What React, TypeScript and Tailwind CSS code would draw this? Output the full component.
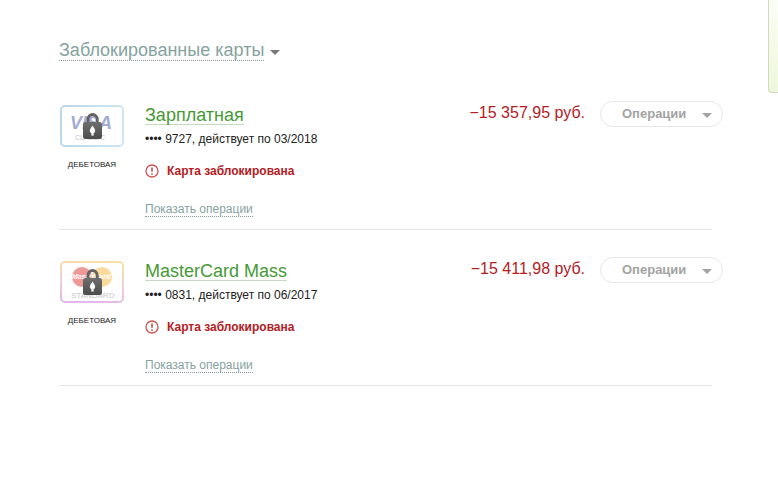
import { memo } from "react";

type CardBrand = "visa" | "mastercard";

type BlockedCard = {
  id: number;
  brand: CardBrand;
  name: string;
  lastDigits: string;
  expires: string;
  balance: string;
};

const cards: BlockedCard[] = [
  {
    id: 1,
    brand: "visa",
    name: "Зарплатная",
    lastDigits: "9727",
    expires: "03/2018",
    balance: "−15 357,95 руб.",
  },
  {
    id: 2,
    brand: "mastercard",
    name: "MasterCard Mass",
    lastDigits: "0831",
    expires: "06/2017",
    balance: "−15 411,98 руб.",
  },
];

const Lock = () => (
  <g>
    <path
      d="M28 19v-4.500a4.600 5 0 0 1 9.200 0V19"
      fill="none"
      stroke="#636363"
      strokeWidth="3"
    />
    <rect x="23" y="17" width="19" height="17" rx="2.5" fill="url(#lock)" />
    <path
      d="M32.500 20.500c.8 1.900 2.700 3.300 2.700 5.300a2.700 2.700 0 0 1-1.700 2.500l.3 2.200h-2.600l.3-2.200a2.700 2.700 0 0 1-1.700-2.500c0-2 1.900-3.400 2.700-5.300z"
      fill="#fff"
    />
  </g>
);

const CardImage = ({ brand }: { brand: CardBrand }) => (
  <svg
    className="block h-[42px] w-16"
    viewBox="0 0 64 42"
    role="img"
    aria-label={brand === "visa" ? "Visa Classic" : "MasterCard Standard"}
  >
    <defs>
      <linearGradient id="lock" x1="0" y1="0" x2="0" y2="1">
        <stop offset="0" stopColor="#6e6e6e" />
        <stop offset="1" stopColor="#4c4c4c" />
      </linearGradient>
      <linearGradient id="visaBorder" x1="0" y1="0" x2="1" y2="0">
        <stop offset="0" stopColor="#b9d8e8" />
        <stop offset="1" stopColor="#cde6f3" />
      </linearGradient>
      <linearGradient id="mcBorder" x1="0.6" y1="0" x2="0.4" y2="1">
        <stop offset="0" stopColor="#f8dfa6" />
        <stop offset="0.5" stopColor="#f2d0d3" />
        <stop offset="1" stopColor="#e2b8ec" />
      </linearGradient>
    </defs>
    <rect
      x="1"
      y="1"
      width="62"
      height="40"
      rx="4"
      fill="#fff"
      stroke={brand === "visa" ? "url(#visaBorder)" : "url(#mcBorder)"}
      strokeWidth="2"
    />
    {brand === "visa" ? (
      <g fontFamily="Liberation Sans, sans-serif">
        <text x="10" y="24" fontSize="18" fontWeight="700" fontStyle="italic" fill="#a3abd3">
          VISA
        </text>
        <text x="15" y="35" fontSize="7" fill="#c6c6c6">
          CLASSIC
        </text>
      </g>
    ) : (
      <g fontFamily="Liberation Sans, sans-serif">
        <circle cx="42" cy="16" r="10" fill="#fbdb9d" />
        <circle cx="22" cy="16" r="10" fill="#ee9898" />
        <text x="12" y="18" fontSize="7" fontWeight="700" fontStyle="italic" fill="#fff">
          MasterCard
        </text>
        <text x="11" y="37" fontSize="8" fill="#c6c6c6">
          STANDARD
        </text>
      </g>
    )}
    <Lock />
  </svg>
);

const WarningIcon = () => (
  <svg className="size-3.5" viewBox="0 0 14 14" aria-hidden="true">
    <circle cx="7" cy="7" r="6" fill="none" stroke="#cf5353" strokeWidth="1.300" />
    <path d="M7 3.500v4.300M7 9.200v1.500" stroke="#c43d3d" strokeWidth="1.500" />
  </svg>
);

const Caret = ({ className }: { className: string }) => (
  <svg className={className} viewBox="0 0 10 5" aria-hidden="true">
    <path d="M0 0h10L5 5z" fill="currentColor" />
  </svg>
);

const CardRow = memo(({ card }: { card: BlockedCard }) => {
  return (
    <li className="flex items-start border-b border-[#e6e6e6] pt-[27px] pb-3">
      <div className="flex w-[86px] shrink-0 flex-col items-start pt-1 pl-px">
        <div className="flex flex-col items-center">
          <CardImage brand={card.brand} />
          <span className="mt-3 text-[8px] leading-3 text-[#222]">ДЕБЕТОВАЯ</span>
        </div>
      </div>
      <div className="flex min-w-0 flex-1 flex-col items-start pt-[5px] text-xs">
        <a
          href="#"
          className="border-b border-[#c5d9c0] text-lg leading-[18px] text-[#459a35]"
        >
          {card.name}
        </a>
        <p className="mt-1.5 leading-4 text-[#222]">
          •••• {card.lastDigits}, действует по {card.expires}
        </p>
        <p className="mt-4 flex items-center gap-2 leading-4 font-bold text-[#b3201f]">
          <WarningIcon />
          Карта заблокирована
        </p>
        <a
          href="#"
          className="mt-6 border-b border-dotted border-[#7f9e9b] leading-[13px] text-[#86a29f]"
        >
          Показать операции
        </a>
      </div>
      <div className="-mr-[11px] flex shrink-0 items-start gap-[15px]">
        <span className="text-base leading-6 text-[#b3201f]">{card.balance}</span>
        <button
          type="button"
          className="flex h-[26px] w-[123px] items-center justify-between rounded-full border border-[#e8e8e8] pr-2.5 pl-[21px] text-[13px] font-bold text-[#a3a3a3]"
        >
          Операции
          <Caret className="mt-0.5 h-[5px] w-[10px]" />
        </button>
      </div>
    </li>
  );
});

const App = () => {
  return (
    <div className="flex min-h-screen items-start bg-white font-['Liberation_Sans',Arial,sans-serif]">
      <main className="min-w-0 flex-1 pt-10 pr-14 pl-[59px]">
        <h1 className="flex">
          <button
            type="button"
            className="flex items-center gap-1.5 text-lg leading-5 text-[#86a29f]"
          >
            <span className="border-b border-dotted border-[#7f9e9b]">
              Заблокированные карты
            </span>
            <Caret className="mt-1 h-[5px] w-[10px] text-[#777]" />
          </button>
        </h1>
        <ul className="mt-[13px]">
          {cards.map((card) => (
            <CardRow key={card.id} card={card} />
          ))}
        </ul>
      </main>
      <aside className="h-[93px] w-2.5 shrink-0 rounded-bl border-b border-l border-[#d3d8c4] bg-linear-to-b from-[#fcfef6] to-[#eef7da]" />
    </div>
  );
};

export default App;
